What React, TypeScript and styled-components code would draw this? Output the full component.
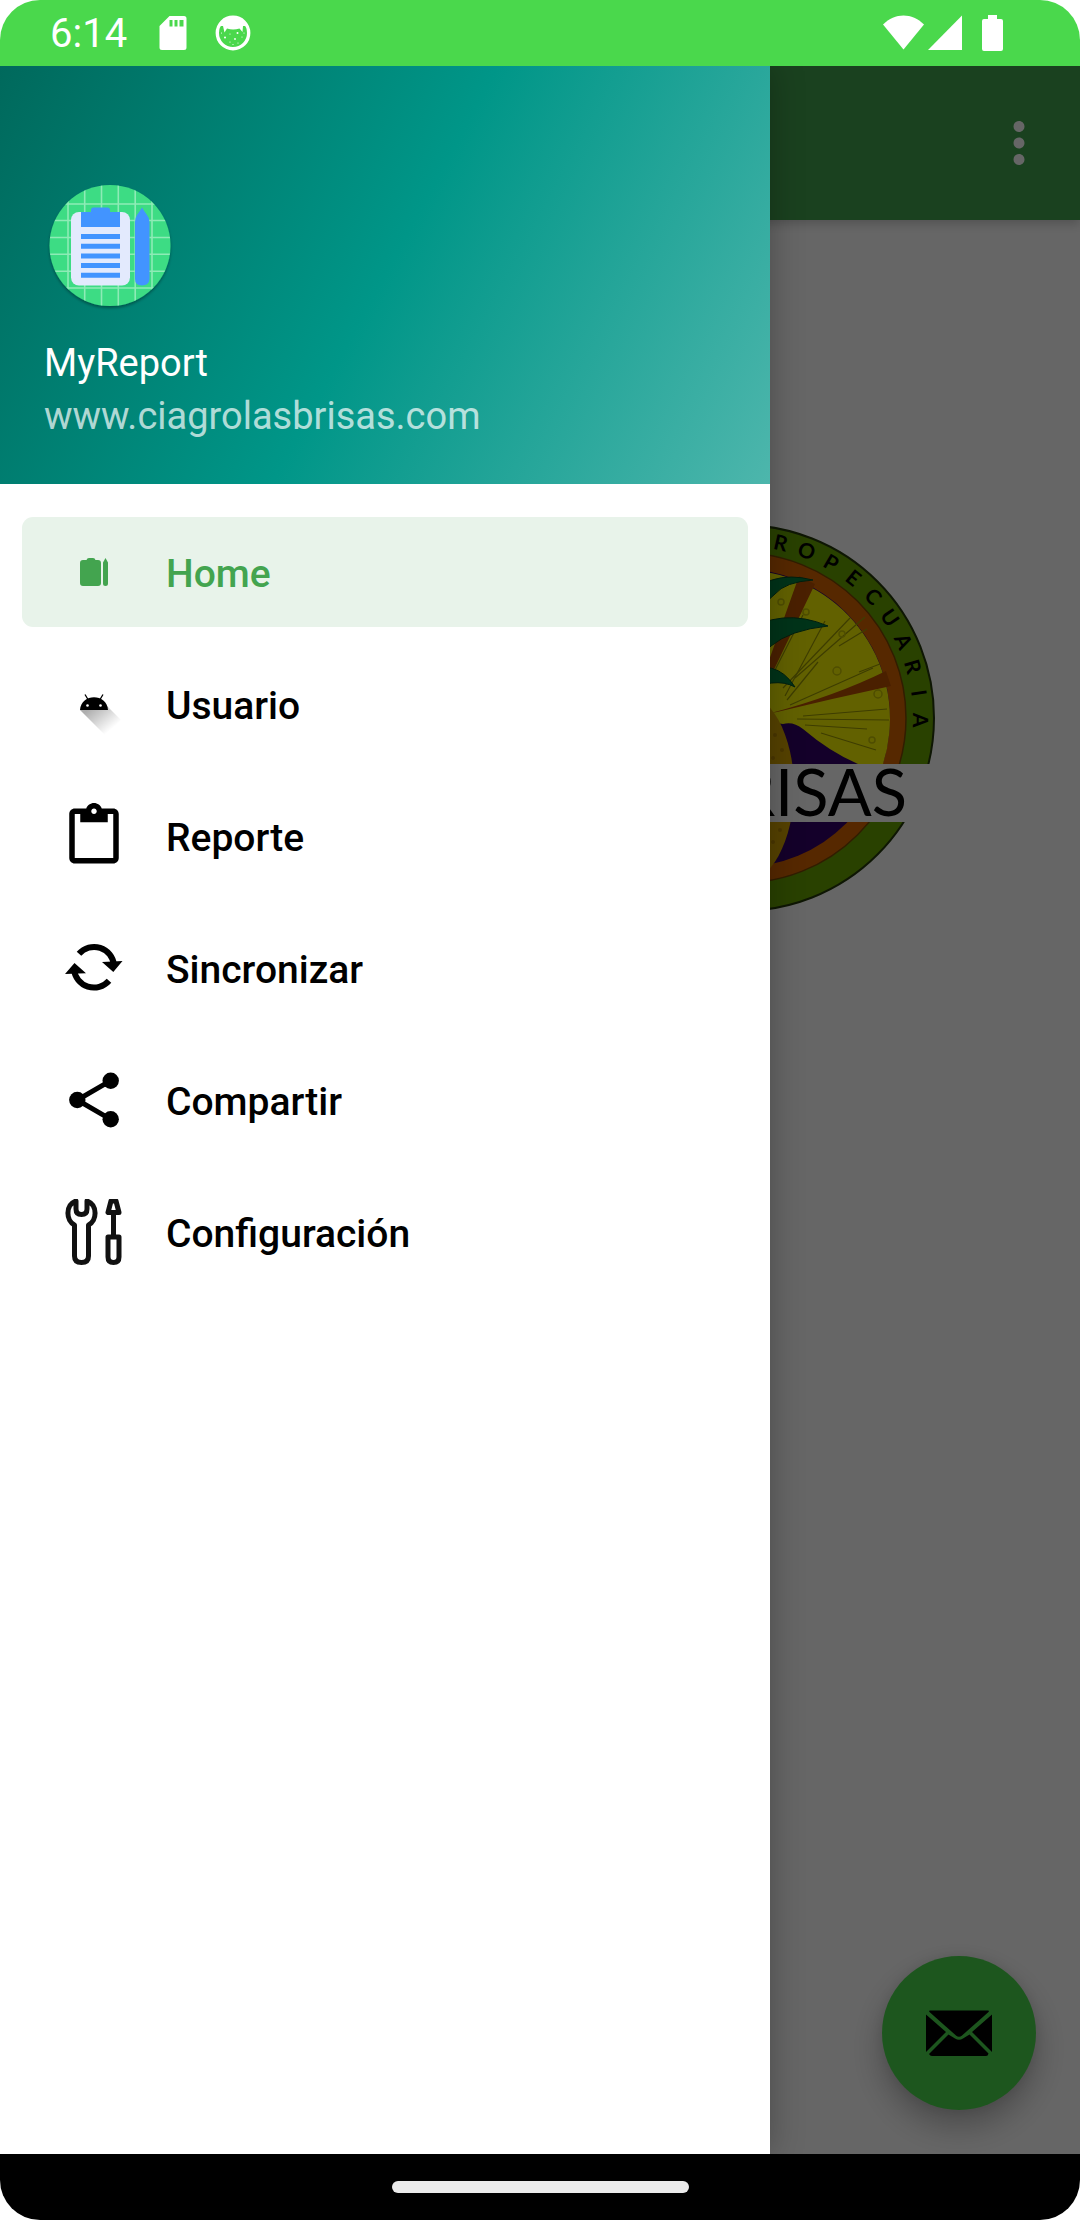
import React from 'react';
import styled, { createGlobalStyle } from 'styled-components';

const GlobalStyle = createGlobalStyle`
  * { box-sizing: border-box; }
  body { margin: 0; background: #fff; font-family: Roboto, "Noto Sans", sans-serif; }
`;

const Screen = styled.div`
  display: flex;
  flex-direction: column;
  min-height: 100vh;
  border-radius: 40px;
  overflow: hidden;
`;

const StatusBar = styled.header`
  display: flex;
  align-items: center;
  justify-content: space-between;
  height: 66px;
  padding: 0 77px 0 50px;
  background: #4ad84c;
  color: #fff;
`;

const StatusGroup = styled.div<{ $gap: number }>`
  display: flex;
  align-items: center;
  gap: ${(p) => p.$gap}px;
`;

const Clock = styled.time`
  padding: 2px 4px 0 0;
  font-size: 40px;
  line-height: 48px;
`;

const Stage = styled.div`
  position: relative;
  flex: 1;
  display: flex;
  overflow: hidden;
`;

const Page = styled.main`
  flex: 1;
  display: flex;
  flex-direction: column;
  background: #fff;
`;

const AppBar = styled.div`
  display: flex;
  align-items: center;
  justify-content: flex-end;
  height: 154px;
  padding-right: 28px;
  background: #43a44f;
  box-shadow: 0 4px 10px rgba(0, 0, 0, 0.2);
`;

const IconButton = styled.button`
  display: flex;
  width: 66px;
  height: 66px;
  padding: 0;
  border: 0;
  background: none;
  color: #fff;
`;

const Content = styled.section`
  flex: 1;
  display: flex;
  flex-direction: column;
  align-items: center;
  justify-content: space-between;
  padding: 298px 44px 44px;
`;

const Fab = styled.button`
  display: flex;
  align-items: center;
  justify-content: center;
  align-self: flex-end;
  width: 154px;
  height: 154px;
  padding: 0;
  border: 0;
  border-radius: 50%;
  background: #4ad84c;
  color: #000;
  box-shadow: 0 16px 32px rgba(0, 0, 0, 0.28), 0 0 12px rgba(0, 0, 0, 0.08);
`;

const Scrim = styled.div`
  position: absolute;
  inset: 0;
  background: rgba(0, 0, 0, 0.6);
`;

const Drawer = styled.aside`
  position: absolute;
  top: 0;
  bottom: 0;
  left: 0;
  width: 770px;
  max-width: 90%;
  background: #fff;
  box-shadow: 0 0 32px rgba(0, 0, 0, 0.28);
`;

const DrawerHeader = styled.div`
  display: flex;
  flex-direction: column;
  gap: 25px;
  padding: 114px 44px 41px;
  color: #fff;
  background: linear-gradient(118.5deg, #00695c, #009688 50%, #4db6ac);
`;

const HeaderLine = styled.p<{ $muted?: boolean }>`
  margin: 0;
  font-size: 38px;
  line-height: 53px;
  color: ${(p) => (p.$muted ? 'rgba(255, 255, 255, 0.7)' : '#fff')};
`;

const Menu = styled.ul`
  display: flex;
  flex-direction: column;
  gap: 22px;
  margin: 0;
  padding: 33px 22px;
  list-style: none;
`;

const MenuLink = styled.a<{ $active?: boolean }>`
  display: flex;
  align-items: center;
  gap: 39px;
  height: 110px;
  padding: 0 39px;
  border-radius: 11px;
  font-size: 39px;
  line-height: 48px;
  font-weight: 500;
  text-decoration: none;
  color: ${(p) => (p.$active ? '#43a44f' : '#000')};
  background: ${(p) => (p.$active ? '#e8f3ea' : 'transparent')};
`;

const MenuLabel = styled.span`
  padding-top: 3px;
`;

const NavigationBar = styled.footer`
  display: flex;
  align-items: center;
  justify-content: center;
  height: 66px;
  background: #000;
`;

const Handle = styled.div`
  width: 297px;
  height: 12px;
  border-radius: 6px;
  background: #ebebeb;
`;

const SdCardIcon = () => (
  <svg width="28" height="36" viewBox="0 0 28 36" aria-hidden="true">
    <path fill="currentColor" d="M10.500 1H25a2.500 2.500 0 0 1 2.500 2.500v29a2.500 2.500 0 0 1-2.500 2.500H3a2.500 2.500 0 0 1-2.500-2.500V11z" />
    <path fill="#4ad84c" d="M10.500 5h3v6.500h-3zM15.500 5h3v6.500h-3zM20.500 5h4v6.500h-4z" />
  </svg>
);

const BadgeIcon = () => (
  <svg width="36" height="36" viewBox="0 0 36 36" aria-hidden="true">
    <circle cx="18" cy="18" r="15.700" fill="none" stroke="currentColor" strokeWidth="3.400" />
    <path fill="currentColor" d="M5 11C9 0 27 0 31 11L28 11 27.500 17 24.500 13.500Q18 15.500 12 13.500L9.500 17.500 8 11z" />
    <g fill="currentColor">
      <circle cx="10" cy="22.500" r="1" />
      <circle cx="22.500" cy="18" r="1" />
      <circle cx="20" cy="24" r="0.900" />
      <circle cx="27" cy="22" r="0.600" />
      <circle cx="15" cy="19" r="0.600" />
      <circle cx="15" cy="27" r="0.600" />
      <circle cx="6.500" cy="18" r="0.600" />
      <circle cx="18" cy="29.500" r="0.600" />
      <circle cx="23" cy="28" r="0.600" />
      <circle cx="29" cy="18" r="0.600" />
    </g>
  </svg>
);

const WifiIcon = () => (
  <svg width="41" height="36" viewBox="0 0 41 36" aria-hidden="true">
    <path fill="currentColor" d="M20.500 34.500L0 9.500C12-2.500 29-2.500 41 9.500z" />
  </svg>
);

const SignalIcon = () => (
  <svg width="34" height="36" viewBox="0 0 34 36" aria-hidden="true">
    <path fill="currentColor" d="M34 .5V35H0z" />
  </svg>
);

const BatteryIcon = () => (
  <svg width="21" height="36" viewBox="0 0 21 36" aria-hidden="true">
    <path fill="currentColor" d="M6 0h9v4h4a2 2 0 0 1 2 2v28a2 2 0 0 1-2 2H2a2 2 0 0 1-2-2V6a2 2 0 0 1 2-2h4z" />
  </svg>
);

const MoreIcon = () => (
  <svg width="66" height="66" viewBox="0 0 24 24" aria-hidden="true">
    <path fill="currentColor" d="M12 8c1.100 0 2-.9 2-2s-.9-2-2-2-2 .9-2 2 .9 2 2 2zm0 2c-1.100 0-2 .9-2 2s.9 2 2 2 2-.9 2-2-.9-2-2-2zm0 6c-1.100 0-2 .9-2 2s.9 2 2 2 2-.9 2-2-.9-2-2-2z" />
  </svg>
);

const MailIcon = () => (
  <svg width="66" height="66" viewBox="0 0 66 66" aria-hidden="true">
    <path fill="currentColor" d="M4 10.500H62Q63.500 10.500 62.500 12L36 35.500Q33 38 30 35.500L3.500 12Q2.500 10.500 4 10.500z" />
    <path fill="currentColor" d="M0 14.500L20 32 0 52zM66 14.500L46 32 66 52z" />
    <path fill="currentColor" d="M22.500 34.500L29 38.500Q33 41 37 38.500L43.500 34.500 62.500 53.500Q62 56 60 56H6Q4 56 3 54z" />
  </svg>
);

const AvatarIcon = () => (
  <svg width="132" height="132" viewBox="0 0 132 132" role="img" aria-label="MyReport">
    <defs>
      <clipPath id="disc"><circle cx="66" cy="65.500" r="60.500" /></clipPath>
      <filter id="discShadow" x="-10%" y="-10%" width="120%" height="125%">
        <feDropShadow dx="0" dy="2" stdDeviation="1.500" floodOpacity="0.35" />
      </filter>
    </defs>
    <circle cx="66" cy="65.500" r="60.500" fill="#3ddc84" filter="url(#discShadow)" />
    <g clipPath="url(#disc)" stroke="#8eebb6" strokeWidth="1.600">
      <path d="M24 0V132M40.700 0V132M57.500 0V132M74.300 0V132M91.200 0V132M108 0V132M0 24H132M0 40.500H132M0 57.500H132M0 74.300H132M0 91.200H132M0 108H132" />
    </g>
    <rect x="27" y="32" width="59" height="73.500" rx="8" fill="#e3eafd" />
    <path fill="#4294ff" d="M37 32H47V30Q47 27.500 49.500 27.500H63.500Q66 27.500 66 30V32H76V47H37zM37 54h39v5H37zM37 63.700h39v5H37zM37 73.400h39v5H37zM37 83h39v5H37zM37 92.700h39v5H37z" />
    <path fill="#4294ff" d="M98 27.500Q100 31 103 35Q105.500 38 105.500 42V99Q105 105.500 98 105.500T91 99V42Q91 38 93 35Q96 31 98 27.500z" />
  </svg>
);

const MenuSvg = ({ children }: { children: React.ReactNode }) => (
  <svg width="66" height="66" viewBox="0 0 66 66" aria-hidden="true">
    {children}
  </svg>
);

const HomeIcon = () => (
  <MenuSvg>
    <path fill="currentColor" d="M22 21H25.500Q26 19 28 19H32Q34 19 34.500 21H37Q40 21 40 24V44Q40 47 37 47H22Q19 47 19 44V24Q19 21 22 21zM44.500 19L47 23.500V44.500Q47 47 44.500 47T42 44.500V23.500z" />
  </MenuSvg>
);

const UserIcon = () => (
  <MenuSvg>
    <defs>
      <linearGradient id="longShadow" gradientUnits="userSpaceOnUse" x1="33" y1="34" x2="52" y2="57">
        <stop offset="0" stopColor="#000" stopOpacity="0.32" />
        <stop offset="1" stopColor="#000" stopOpacity="0" />
      </linearGradient>
    </defs>
    <path fill="url(#longShadow)" d="M19 39L45 65 60 49 45 34z" />
    <path fill="currentColor" d="M19 39C20 22 46 22 47 39z" />
    <path stroke="currentColor" strokeWidth="1.300" d="M24 23.500L27 28.500M42 23.500L39 28.500" />
    <circle cx="26.500" cy="34.500" r="1.300" fill="#fff" />
    <circle cx="39.500" cy="34.500" r="1.300" fill="#fff" />
  </MenuSvg>
);

const ReportIcon = () => (
  <svg width="66" height="66" viewBox="0 0 24 24" aria-hidden="true">
    <path fill="currentColor" d="M19 2h-4.180C14.400.84 13.300 0 12 0c-1.300 0-2.400.84-2.820 2H5c-1.100 0-2 .9-2 2v16c0 1.100.9 2 2 2h14c1.100 0 2-.9 2-2V4c0-1.100-.9-2-2-2zm-7 0c.55 0 1 .45 1 1s-.45 1-1 1-1-.45-1-1 .45-1 1-1zm7 18H5V4h2v3h10V4h2v16z" />
  </svg>
);

const SyncIcon = () => (
  <MenuSvg>
    <path fill="none" stroke="currentColor" strokeWidth="6" d="M18 18.800A20 20 0 0 1 53 30M48 45.700A20 20 0 0 1 13 34.500" />
    <path fill="currentColor" d="M41 27L61.500 26 52.300 37zM25 38.300L4 39 13.500 28z" />
  </MenuSvg>
);

const ShareIcon = () => (
  <MenuSvg>
    <path fill="none" stroke="currentColor" strokeWidth="5" d="M49.700 13.700L16.300 33 49.700 52.300" />
    <circle cx="49.700" cy="13.700" r="8.200" fill="currentColor" />
    <circle cx="16.300" cy="33" r="8.200" fill="currentColor" />
    <circle cx="49.700" cy="52.300" r="8.200" fill="currentColor" />
  </MenuSvg>
);

const ToolsIcon = () => (
  <MenuSvg>
    <g fill="none" stroke="#111" strokeWidth="5" strokeLinejoin="round">
      <path d="M15 2V10Q15 15.500 20.500 15.500T26 10V2C37 6 36 22 27.500 26V57Q27.500 63.500 20.500 63.500T13.500 57V26C5 22 4 6 15 2z" />
      <path d="M50 2L47 13.500H58L55 2z" />
      <path d="M52.500 14V37" />
      <path d="M47 38H58V58Q58 63.500 52.500 63.500T47 58z" />
    </g>
  </MenuSvg>
);

const RING_LETTERS = 'AGROPECUARIA'.split('');
const PULP_LINES = [
  [650, 178, 690, 103], [648, 170, 715, 100], [660, 160, 730, 99], [652, 182, 683, 144],
  [704, 128, 732, 111], [655, 187, 738, 150], [668, 198, 752, 191], [662, 201, 754, 202],
  [670, 207, 732, 211], [686, 215, 741, 232], [640, 152, 668, 97], [724, 154, 745, 146],
];

const BrandLogo = () => (
  <svg width="810" height="400" viewBox="0 0 810 400" role="img" aria-label="Agropecuaria Las Brisas">
    <circle cx="606" cy="200" r="193" fill="#68a200" stroke="#24380a" strokeWidth="2" />
    <circle cx="606" cy="200" r="165" fill="#d86500" stroke="#7a4a00" strokeWidth="1.500" />
    <circle cx="606" cy="200" r="149" fill="#320069" />
    <path fill="#f6f200" d="M457 200A149 149 0 1 1 748 246H723Q695 234 668 211Q658 203 648 206L606 200z" />
    <path fill="#b85000" d="M636 195Q700 178 751 153L756 168Q700 180 642 194zM622 176L664 58 680 66 634 162z" />
    <g stroke="#9a9800" strokeWidth="1.200">
      {PULP_LINES.map(([x1, y1, x2, y2]) => (
        <line key={`${x1}-${y2}`} x1={x1} y1={y1} x2={x2} y2={y2} />
      ))}
    </g>
    <g fill="none" stroke="#c4c000" strokeWidth="1.500">
      <circle cx="707" cy="116" r="3" />
      <circle cx="702" cy="153" r="4" />
      <circle cx="743" cy="176" r="4" />
      <circle cx="737" cy="222" r="3" />
      <circle cx="671" cy="94" r="3" />
      <circle cx="646" cy="84" r="3" />
    </g>
    <ellipse cx="606" cy="270" rx="53" ry="96" fill="#d8a600" />
    <g fill="#b98a00">
      <circle cx="640" cy="217" r="2" />
      <circle cx="647" cy="232" r="2" />
      <circle cx="638" cy="240" r="2" />
      <circle cx="645" cy="312" r="2" />
      <circle cx="638" cy="324" r="2" />
    </g>
    <path fill="#00803f" stroke="#004d26" strokeWidth="1" d="M606 86Q632 50 678 62Q650 64 640 76Q620 92 606 120zM606 116Q646 88 693 108Q655 112 636 128Q620 142 606 170zM606 156Q640 138 660 169Q640 158 606 175z" />
    <rect x="402" y="246" width="408" height="58" fill="#fff" />
    {RING_LETTERS.map((letter, i) => (
      <text
        key={i}
        x="606"
        y="28"
        transform={`rotate(${-4.500 + i * 8.650} 606 200)`}
        textAnchor="middle"
        fontFamily="Lato, sans-serif"
        fontSize="21"
        fontWeight="700"
      >
        {letter}
      </text>
    ))}
    <text x="772" y="298" textAnchor="end" fontFamily="Lato, sans-serif" fontSize="65">
      LAS BRISAS
    </text>
  </svg>
);

const MENU = [
  { label: 'Home', icon: HomeIcon, active: true },
  { label: 'Usuario', icon: UserIcon },
  { label: 'Reporte', icon: ReportIcon },
  { label: 'Sincronizar', icon: SyncIcon },
  { label: 'Compartir', icon: ShareIcon },
  { label: 'Configuración', icon: ToolsIcon },
];

export default function App() {
  return (
    <>
      <GlobalStyle />
      <Screen>
        <StatusBar>
          <StatusGroup $gap={28}>
            <Clock>6:14</Clock>
            <SdCardIcon />
            <BadgeIcon />
          </StatusGroup>
          <StatusGroup $gap={20}>
            <StatusGroup $gap={4}>
              <WifiIcon />
              <SignalIcon />
            </StatusGroup>
            <BatteryIcon />
          </StatusGroup>
        </StatusBar>
        <Stage>
          <Page>
            <AppBar>
              <IconButton type="button" aria-label="Más opciones">
                <MoreIcon />
              </IconButton>
            </AppBar>
            <Content>
              <BrandLogo />
              <Fab type="button" aria-label="Correo">
                <MailIcon />
              </Fab>
            </Content>
          </Page>
          <Scrim />
          <Drawer>
            <DrawerHeader>
              <AvatarIcon />
              <div>
                <HeaderLine>MyReport</HeaderLine>
                <HeaderLine $muted>www.ciagrolasbrisas.com</HeaderLine>
              </div>
            </DrawerHeader>
            <nav>
              <Menu>
                {MENU.map(({ label, icon: Icon, active }) => (
                  <li key={label}>
                    <MenuLink href="#" $active={active}>
                      <Icon />
                      <MenuLabel>{label}</MenuLabel>
                    </MenuLink>
                  </li>
                ))}
              </Menu>
            </nav>
          </Drawer>
        </Stage>
        <NavigationBar>
          <Handle />
        </NavigationBar>
      </Screen>
    </>
  );
}
